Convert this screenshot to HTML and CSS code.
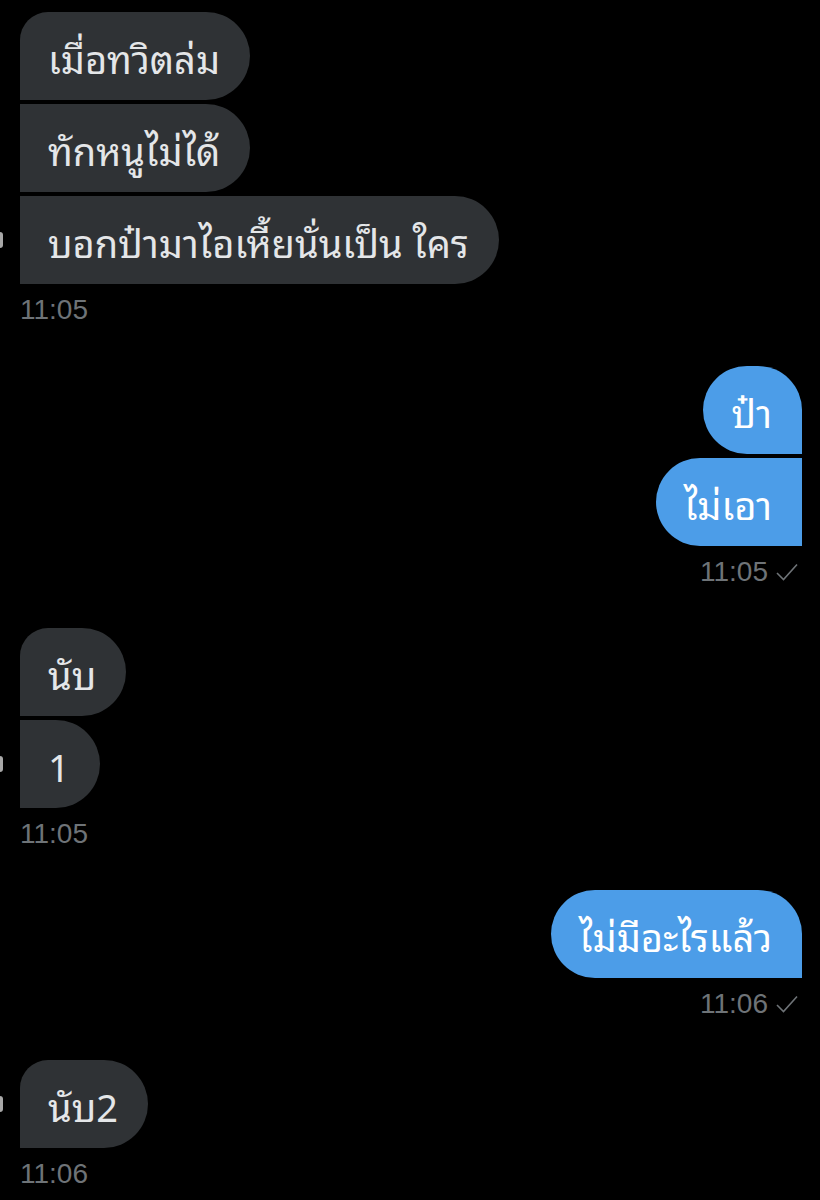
FILE: index.html
```html
<!DOCTYPE html>
<html lang="th">
  <head>
    <meta charset="UTF-8" />
    <meta name="viewport" content="width=device-width, initial-scale=1.0" />
    <title>Messages</title>
    <link rel="stylesheet" href="styles.css">
  </head>
  <body>
    <div class="chat">
      <div class="group in">
        <div class="row"><div class="bubble first">เมื่อทวิตล่ม</div></div>
        <div class="row"><div class="bubble">ทักหนูไม่ได้</div></div>
        <div class="row"><span class="avatar"></span><div class="bubble">บอกป๋ามาไอเหี้ยนั่นเป็น ใคร</div></div>
        <div class="time">11:05</div>
      </div>

      <div class="group out">
        <div class="row"><div class="bubble first">ป๋า</div></div>
        <div class="row"><div class="bubble">ไม่เอา</div></div>
        <div class="time">11:05 <svg class="check" width="22" height="18" viewBox="0 0 22 18"><polyline points="1,10 7.5,16.5 21,1.5" /></svg></div>
      </div>

      <div class="group in">
        <div class="row"><div class="bubble first">นับ</div></div>
        <div class="row"><span class="avatar"></span><div class="bubble">1</div></div>
        <div class="time">11:05</div>
      </div>

      <div class="group out">
        <div class="row"><div class="bubble first">ไม่มีอะไรแล้ว</div></div>
        <div class="time">11:06 <svg class="check" width="22" height="18" viewBox="0 0 22 18"><polyline points="1,10 7.5,16.5 21,1.5" /></svg></div>
      </div>

      <div class="group in">
        <div class="row"><span class="avatar"></span><div class="bubble first">นับ2</div></div>
        <div class="time">11:06</div>
      </div>
    </div>
  </body>
</html>
```

FILE: styles.css
```css
body {
  margin: 0;
  padding: 0;
  background-color: #000;
  font-family: "Noto Sans Thai Looped", "Loma", "Garuda", "Kinnari", "Noto Serif Thai", "Noto Sans Thai", "Noto Sans", sans-serif;
}
.chat {
  padding: 12px 18px 0 20px;
}
.group {
  display: flex;
  flex-direction: column;
  gap: 4px;
  margin-bottom: 40px;
}
.group.in {
  align-items: flex-start;
}
.group.out {
  align-items: flex-end;
}
.row {
  display: flex;
  align-items: center;
}
.avatar {
  width: 3px;
  height: 16px;
  margin-left: -20px;
  margin-right: 17px;
  border-radius: 0 8px 8px 0;
  background-color: #a8a8a8;
}
.bubble {
  box-sizing: border-box;
  height: 88px;
  display: flex;
  align-items: center;
  padding: 0 30px 0 28px;
  font-size: 38px;
  white-space: nowrap;
}
.in .bubble {
  background-color: #2f3235;
  color: #e4e6e8;
  border-radius: 0 44px 44px 0;
}
.in .bubble.first {
  border-radius: 28px 44px 44px 0;
}
.out .bubble {
  background-color: #4c9de8;
  color: #fff;
  border-radius: 44px 0 0 44px;
}
.out .bubble.first {
  border-radius: 44px 44px 0 44px;
}
.time {
  margin-top: 6px;
  height: 32px;
  display: flex;
  align-items: center;
  gap: 8px;
  font-family: "Liberation Sans", Arial, sans-serif;
  font-size: 28px;
  color: #6e7377;
}
.out .time {
  margin-right: 4px;
}
.check polyline {
  fill: none;
  stroke: #6e7377;
  stroke-width: 1.6;
}
```
